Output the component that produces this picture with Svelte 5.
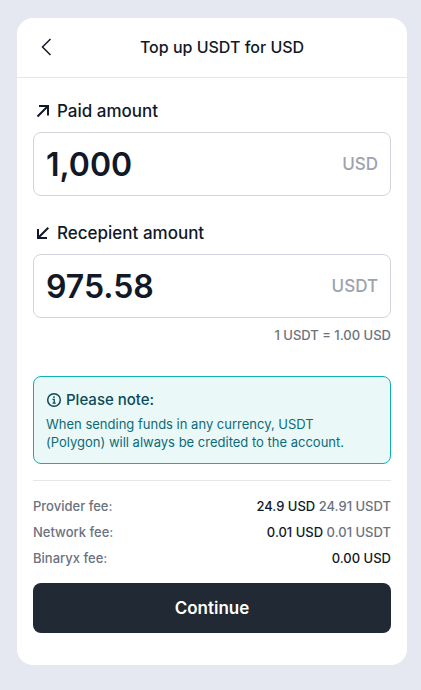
<script>
  let paid = $state('1,000');
  let received = $state('975.58');

  const fees = [
    { label: 'Provider fee:', usd: '24.9 USD', usdt: '24.91 USDT' },
    { label: 'Network fee:', usd: '0.01 USD', usdt: '0.01 USDT' },
    { label: 'Binaryx fee:', usd: '0.00 USD', usdt: '' }
  ];
</script>

<main class="page">
  <section class="card">
    <header>
      <button class="back" type="button" aria-label="Back">
        <svg width="20" height="20" viewBox="0 0 20 20" fill="none" stroke="currentColor" stroke-width="1.5">
          <path d="M17.5 2 9.5 10l8 8" />
        </svg>
      </button>
      <h1>Top up USDT for USD</h1>
    </header>

    <form class="body" onsubmit={(e) => e.preventDefault()}>
      <div class="field">
        <label for="paid">
          <svg width="20" height="20" viewBox="0 0 20 20" fill="none" stroke="currentColor" stroke-width="2">
            <path d="M4.5 15.5 15 5M6 5h9v9.5" />
          </svg>
          Paid amount
        </label>
        <div class="box">
          <input id="paid" type="text" inputmode="decimal" bind:value={paid} />
          <span class="unit">USD</span>
        </div>
      </div>

      <div class="field">
        <label for="received">
          <svg width="20" height="20" viewBox="0 0 20 20" fill="none" stroke="currentColor" stroke-width="2">
            <path d="M15.3 4.7 5 15M5 6v9h9" />
          </svg>
          Recepient amount
        </label>
        <div class="box">
          <input id="received" type="text" inputmode="decimal" bind:value={received} />
          <span class="unit">USDT</span>
        </div>
        <p class="rate">1 USDT = 1.00 USD</p>
      </div>

      <aside class="note">
        <h2>
          <svg width="16" height="16" viewBox="0 0 16 16" fill="none" stroke="currentColor" stroke-width="1.5">
            <circle cx="8" cy="8" r="6.3" />
            <path d="M6.5 7.3h1.7V11M6.5 11.2h3.2" stroke-width="1.3" />
            <circle cx="8" cy="5.1" r="0.9" fill="currentColor" stroke="none" />
          </svg>
          Please note:
        </h2>
        <p>When sending funds in any currency, USDT (Polygon) will always be credited to the account.</p>
      </aside>

      <dl class="fees">
        {#each fees as fee}
          <div class="fee">
            <dt>{fee.label}</dt>
            <dd>{fee.usd}{#if fee.usdt}{' '}<span>{fee.usdt}</span>{/if}</dd>
          </div>
        {/each}
      </dl>

      <button class="submit" type="submit">Continue</button>
    </form>
  </section>
</main>

<style>
  :global(body) {
    margin: 0;
    background: #e5e8f0;
  }

  .page {
    box-sizing: border-box;
    min-height: 100vh;
    padding: 18px 14px 25px 17px;
    background: #e5e8f0;
    color: #111827;
    font-family: Inter, 'Liberation Sans', sans-serif;
    font-weight: 500;
  }

  .card {
    background: #fff;
    border-radius: 16px;
  }

  header {
    display: flex;
    align-items: center;
    padding: 17px 16px 18px;
    border-bottom: 1px solid #e5e7eb;
  }

  h1,
  h2,
  p,
  dl,
  dd {
    margin: 0;
  }

  h1 {
    flex: 1;
    text-align: center;
    font-size: 16px;
    line-height: 24px;
    font-weight: 500;
  }

  .back {
    display: flex;
    padding: 0;
    border: 0;
    background: none;
    color: inherit;
    cursor: pointer;
  }

  .body {
    padding: 20px 16px 32px;
  }

  .field + .field {
    margin-top: 24px;
  }

  label {
    display: flex;
    align-items: center;
    gap: 4px;
    margin-bottom: 8px;
    font-size: 17px;
    line-height: 26px;
  }

  .box {
    display: flex;
    align-items: center;
    box-sizing: border-box;
    height: 64px;
    padding: 0 12px;
    border: 1px solid #d1d5db;
    border-radius: 8px;
  }

  input {
    flex: 1;
    min-width: 0;
    padding: 2px 0 0;
    border: 0;
    outline: 0;
    background: none;
    color: inherit;
    font: 600 32px/40px Inter, 'Liberation Sans', sans-serif;
  }

  .unit {
    color: #9ca3af;
    font-size: 17px;
    line-height: 24px;
  }

  .rate,
  .note p,
  .fees {
    font-size: 13px;
    line-height: 18px;
  }

  .rate {
    margin-top: 8px;
    text-align: right;
    color: #6b7280;
  }

  .note {
    margin-top: 32px;
    padding: 12px;
    border: 1px solid #0fb1b1;
    border-radius: 8px;
    background: #eaf8f8;
    color: #0b6b7a;
  }

  .note p {
    padding-right: 16px;
    font-weight: 400;
  }

  h2 {
    display: flex;
    align-items: center;
    gap: 4px;
    margin-bottom: 4px;
    color: #0b4a58;
    font-size: 15px;
    line-height: 22px;
    font-weight: 500;
  }

  .fees {
    display: grid;
    gap: 8px;
    margin: 16px 0;
    padding-top: 16px;
    border-top: 1px solid #e5e7eb;
  }

  .fee {
    display: flex;
    justify-content: space-between;
  }

  dt,
  dd span {
    color: #6b7280;
  }

  .submit {
    display: block;
    width: 100%;
    height: 50px;
    border: 0;
    border-radius: 8px;
    background: #212934;
    color: #fff;
    font: 600 17px/24px Inter, 'Liberation Sans', sans-serif;
    cursor: pointer;
  }
</style>
